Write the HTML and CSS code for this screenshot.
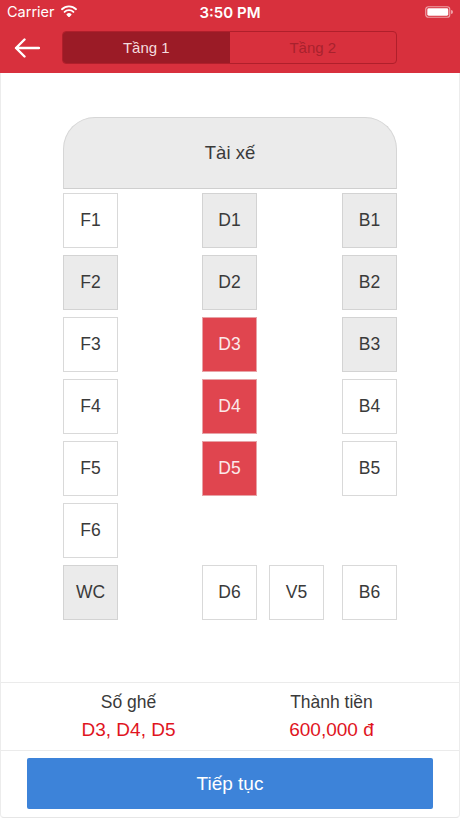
FILE: index.html
```html
<!DOCTYPE html>
<html lang="vi">
<head>
<meta charset="utf-8">
<title>Chọn ghế</title>
<link rel="stylesheet" href="styles.css">
</head>
<body>
<div class="app">
  <header class="top">
    <div class="status">
      <div class="status-left">
        <span class="carrier">Carrier</span>
        <svg class="wifi" width="16" height="12" viewBox="0 0 16 12">
          <path d="M1 4.2 A10 10 0 0 1 15 4.2" fill="none" stroke="#fff" stroke-width="1.9" stroke-linecap="round"/>
          <path d="M3.6 6.9 A6.4 6.4 0 0 1 12.4 6.9" fill="none" stroke="#fff" stroke-width="1.9" stroke-linecap="round"/>
          <path d="M6.1 9.5 A2.9 2.9 0 0 1 9.9 9.5 L8 11.6 Z" fill="#fff" stroke="#fff" stroke-width="1.2" stroke-linejoin="round"/>
        </svg>
      </div>
      <div class="time">3:50 PM</div>
      <div class="status-right">
        <svg class="battery" width="28" height="12" viewBox="0 0 28 12">
          <rect x="0.75" y="0.75" width="24" height="10.5" rx="2.6" fill="none" stroke="#fff" stroke-opacity="0.55" stroke-width="1.2"/>
          <rect x="2.3" y="2.3" width="21" height="7.4" rx="1.4" fill="#fff"/>
          <path d="M26 4 A2 2 0 0 1 26 8 Z" fill="#fff" fill-opacity="0.55"/>
        </svg>
      </div>
    </div>
    <nav class="nav">
      <button class="back" aria-label="Quay lại">
        <svg width="26" height="20" viewBox="0 0 26 20">
          <path d="M25 10 H2 M10.5 1.5 L2 10 L10.5 18.5" fill="none" stroke="#fff" stroke-width="2.4" stroke-linecap="round" stroke-linejoin="round"/>
        </svg>
      </button>
      <div class="segment">
        <div class="seg seg-active">Tầng 1</div>
        <div class="seg">Tầng 2</div>
      </div>
    </nav>
  </header>

  <main class="main">
    <section class="bus">
      <div class="driver">Tài xế</div>
      <div class="seats">
        <div class="seat c1 r1">F1</div>
        <div class="seat c3 r1 taken">D1</div>
        <div class="seat c7 r1 taken">B1</div>

        <div class="seat c1 r2 taken">F2</div>
        <div class="seat c3 r2 taken">D2</div>
        <div class="seat c7 r2 taken">B2</div>

        <div class="seat c1 r3">F3</div>
        <div class="seat c3 r3 picked">D3</div>
        <div class="seat c7 r3 taken">B3</div>

        <div class="seat c1 r4">F4</div>
        <div class="seat c3 r4 picked">D4</div>
        <div class="seat c7 r4">B4</div>

        <div class="seat c1 r5">F5</div>
        <div class="seat c3 r5 picked">D5</div>
        <div class="seat c7 r5">B5</div>

        <div class="seat c1 r6">F6</div>

        <div class="seat c1 r7 taken">WC</div>
        <div class="seat c3 r7">D6</div>
        <div class="seat c5 r7">V5</div>
        <div class="seat c7 r7">B6</div>
      </div>
    </section>

    <section class="summary">
      <div class="sum-col">
        <div class="sum-label">Số ghế</div>
        <div class="sum-value">D3, D4, D5</div>
      </div>
      <div class="sum-col">
        <div class="sum-label">Thành tiền</div>
        <div class="sum-value">600,000 đ</div>
      </div>
    </section>

    <section class="action">
      <button class="continue">Tiếp tục</button>
    </section>
  </main>
</div>
</body>
</html>
```

FILE: styles.css
```css
* { box-sizing: border-box; }

html, body {
  margin: 0;
  padding: 0;
  background: #ffffff;
}

body {
  font-family: "Liberation Sans", Arial, sans-serif;
  color: #333333;
}

.app {
  width: 460px;
  height: 818px;
  display: flex;
  flex-direction: column;
  overflow: hidden;
}

/* ---------- header ---------- */
.top {
  background: #d8303d;
  color: #ffffff;
}

.status {
  height: 20px;
  display: flex;
  align-items: center;
  justify-content: space-between;
  padding: 3px 7px 0 7px;
  font-family: Inter, "Liberation Sans", sans-serif;
  font-size: 14.5px;
  position: relative;
}

.status-left {
  display: flex;
  align-items: center;
  gap: 6px;
  width: 120px;
}

.wifi { display: block; margin-top: -1px; }

.time {
  font-weight: 600;
  font-size: 15px;
  position: absolute;
  left: 0;
  right: 0;
  top: 3px;
  text-align: center;
  pointer-events: none;
}

.status-right {
  display: flex;
  justify-content: flex-end;
  width: 120px;
}

.battery { display: block; }

.nav {
  height: 53px;
  display: flex;
  align-items: center;
  padding: 2px 0 0 0;
}

.back {
  width: 62px;
  height: 40px;
  padding: 0 0 0 14px;
  margin: 0;
  border: 0;
  background: transparent;
  display: flex;
  align-items: center;
}

.back svg { display: block; }

.segment {
  width: 335px;
  height: 33px;
  display: flex;
  border: 1px solid #b01f2b;
  border-radius: 4px;
  overflow: hidden;
}

.seg {
  flex: 1;
  display: flex;
  align-items: center;
  justify-content: center;
  font-size: 15px;
  color: #a8222d;
}

.seg-active {
  background: #9b1b26;
  color: #f4dcde;
}

/* ---------- main ---------- */
.main {
  flex: 1;
  display: flex;
  flex-direction: column;
  border-left: 1px solid #ececec;
  border-right: 1px solid #ececec;
  border-bottom: 1px solid #e6e6e6;
  border-radius: 0 0 4px 4px;
}

.bus {
  flex: 1;
  padding-top: 44px;
  display: flex;
  flex-direction: column;
  align-items: center;
}

.driver {
  width: 334px;
  height: 72px;
  background: #ebebeb;
  border: 1px solid #d6d6d6;
  border-bottom-color: #cfcfcf;
  border-radius: 32px 32px 0 0;
  display: flex;
  align-items: center;
  justify-content: center;
  font-size: 18.5px;
  color: #3a3a3a;
  margin-bottom: 4px;
}

.seats {
  width: 334px;
  display: grid;
  grid-template-columns: 55px 84px 55px 12px 55px 18px 55px;
  grid-template-rows: repeat(7, 55px);
  row-gap: 7px;
}

.seat {
  border: 1px solid #d9d9d9;
  background: #ffffff;
  display: flex;
  align-items: center;
  justify-content: center;
  font-size: 17.5px;
  color: #3a3a3a;
}

.seat.taken {
  background: #ebebeb;
  border-color: #d3d3d3;
}

.seat.picked {
  background: #e0454f;
  border-color: #e7a3a7;
  color: #fbe9ea;
}

.c1 { grid-column: 1; }
.c3 { grid-column: 3; }
.c5 { grid-column: 5; }
.c7 { grid-column: 7; }
.r1 { grid-row: 1; }
.r2 { grid-row: 2; }
.r3 { grid-row: 3; }
.r4 { grid-row: 4; }
.r5 { grid-row: 5; }
.r6 { grid-row: 6; }
.r7 { grid-row: 7; }

/* ---------- summary ---------- */
.summary {
  height: 68px;
  border-top: 1px solid #ebebeb;
  display: flex;
  padding: 7px 26px 0 26px;
}

.sum-col {
  flex: 1;
  display: flex;
  flex-direction: column;
  align-items: center;
}

.sum-label {
  font-size: 17.5px;
  color: #3a3a3a;
  line-height: 24px;
}

.sum-value {
  font-size: 19px;
  color: #e0141e;
  line-height: 32px;
}

.action {
  border-top: 1px solid #ebebeb;
  padding: 7px 26px 0 26px;
  height: 67px;
}

.continue {
  display: flex;
  align-items: center;
  justify-content: center;
  width: 406px;
  height: 51px;
  border: 0;
  border-radius: 2px;
  background: #3d83d9;
  color: #ffffff;
  font-family: "Liberation Sans", Arial, sans-serif;
  font-size: 19px;
  padding: 0;
}
```
